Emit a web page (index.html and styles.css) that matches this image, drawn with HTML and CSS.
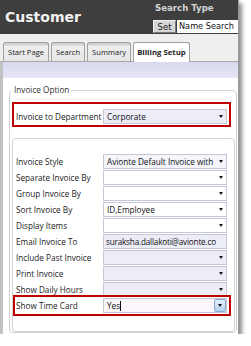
FILE: index.html
```html
<!DOCTYPE html>
<html lang="en">
<head>
  <meta charset="UTF-8">
  <title>Customer - Billing Setup</title>
  <link rel="stylesheet" href="styles.css">
</head>
<body>

  <div class="page">
    <header class="top">
      <h1>Customer</h1>
      <div class="search">
        <div class="search-title">Search Type</div>
        <div class="search-row">
          <button class="btn-set">Set</button>
          <span class="search-input">Name Search</span>
        </div>
      </div>
    </header>

    <nav class="tabs">
      <span class="tab">Start Page</span>
      <span class="tab">Search</span>
      <span class="tab">Summary</span>
      <span class="tab active">Billing Setup</span>
    </nav>

    <div class="content">
      <div class="band"></div>

      <fieldset class="group">
        <legend>Invoice Option</legend>

        <div class="dept">
          <label>Invoice to Department</label>
          <div class="select lav"><span class="val">Corporate</span><span class="arrow"></span></div>
        </div>

        <div class="panel">
          <div class="row">
            <label>Invoice Style</label>
            <div class="select pale"><span class="val">Avionte Default Invoice with</span><span class="arrow"></span></div>
          </div>
          <div class="row">
            <label>Separate Invoice By</label>
            <div class="select"><span class="val"></span><span class="arrow"></span></div>
          </div>
          <div class="row">
            <label>Group Invoice By</label>
            <div class="select"><span class="val"></span><span class="arrow"></span></div>
          </div>
          <div class="row">
            <label>Sort Invoice By</label>
            <div class="select"><span class="val">ID,Employee</span><span class="arrow"></span></div>
          </div>
          <div class="row">
            <label>Display Items</label>
            <div class="select"><span class="val"></span><span class="arrow"></span></div>
          </div>
          <div class="row">
            <label>Email Invoice To</label>
            <div class="select lav"><span class="val email">suraksha.dallakoti@avionte.co</span></div>
          </div>
          <div class="row">
            <label>Include Past Invoice</label>
            <div class="select lav"><span class="val"></span><span class="arrow"></span></div>
          </div>
          <div class="row">
            <label>Print Invoice</label>
            <div class="select lav"><span class="val"></span><span class="arrow"></span></div>
          </div>
          <div class="row">
            <label>Show Daily Hours</label>
            <div class="select lav"><span class="val"></span><span class="arrow"></span></div>
          </div>
          <div class="row mark">
            <label>Show Time Card</label>
            <div class="select focus"><span class="val">Yes<span class="caret"></span></span><span class="drop"><span class="arrow"></span></span></div>
          </div>
        </div>
      </fieldset>
    </div>
  </div>

</body>
</html>
```

FILE: styles.css
```css
* {
  margin: 0;
  padding: 0;
  box-sizing: border-box;
}

body {
  background: #fff;
  font-family: 'Open Sans', sans-serif;
  font-size: 8.2px;
  color: #222;
}

.page {
  width: 239px;
  height: 334px;
  border-right: 1px solid #9a9a9a;
  box-shadow: 3px 3px 4px rgba(0,0,0,0.45);
  overflow: hidden;
  display: flex;
  flex-direction: column;
}

/* header */
.top {
  height: 34px;
  background: #3e3e3e;
  display: flex;
  justify-content: space-between;
}

.top h1 {
  font-family: 'DejaVu Sans', sans-serif;
  font-size: 14px;
  font-weight: bold;
  line-height: 34px;
  color: #f2f2f2;
  padding-left: 5px;
}

.search {
  width: 85px;
  padding-top: 2px;
}

.search-title {
  font-family: 'DejaVu Sans', sans-serif;
  font-size: 8.6px;
  font-weight: bold;
  line-height: 12px;
  color: #d4d4d4;
  padding-left: 2px;
}

.search-row {
  display: flex;
  margin-top: 6px;
  height: 13px;
}

.btn-set {
  width: 23px;
  height: 13px;
  font-family: 'DejaVu Sans', sans-serif;
  font-size: 8.5px;
  color: #222;
  background: #d6d6d6;
  border: 1px solid;
  border-color: #f4f4f4 #7c7c7c #7c7c7c #f4f4f4;
}

.search-input {
  flex: 1;
  margin-left: 1px;
  background: #fff;
  font-family: 'DejaVu Sans', sans-serif;
  font-size: 8.2px;
  line-height: 13px;
  padding-left: 2px;
  white-space: nowrap;
  overflow: hidden;
  color: #111;
}

/* tabs */
.tabs {
  height: 28px;
  background: #f1eeee;
  border-bottom: 1px solid #a8a8a8;
  display: flex;
  align-items: flex-end;
  gap: 2px;
  padding-left: 3px;
}

.tab {
  height: 19px;
  line-height: 18px;
  font-size: 7.6px;
  color: #222;
  padding: 0 4px;
  border: 1px solid #a0a0a0;
  border-bottom: none;
  border-radius: 3px 3px 0 0;
  background: linear-gradient(#d2d2d2 0, #d2d2d2 2px, #efefef 3px, #e6e6e6);
}

.tab.active {
  height: 20px;
  margin-bottom: -1px;
  background: #fff;
  font-weight: bold;
  font-size: 7.8px;
  padding: 0 3px;
}

/* content */
.content {
  flex: 1;
  background: #fff;
  border-left: 3px solid #c2c2c2;
}

.band {
  height: 16px;
  background: linear-gradient(#d8d8ee, #e6e6f6);
}

.group {
  margin: 7px 0 0 6px;
  width: 228px;
  min-width: 0;
  border: 1px solid #d2d2d2;
  border-radius: 4px;
  padding: 0 1px 0 2px;
}

.group legend {
  line-height: 10px;
  padding: 0 2px;
  color: #333;
}

.dept {
  width: 219px;
  height: 25px;
  margin-top: 7px;
  border: 2px solid #c00000;
  display: flex;
  align-items: center;
  padding: 3px 0 0 2px;
}

label {
  flex: none;
  width: 87px;
  white-space: nowrap;
}

.panel {
  margin-top: 11px;
  border: 1px solid #d4d4d4;
  border-radius: 4px;
  padding: 15px 0 18px 3px;
  display: flex;
  flex-direction: column;
  gap: 1px;
}

.row {
  display: flex;
  align-items: center;
  width: 212px;
  padding-right: 1px;
}

.row.mark {
  outline: 2px solid #c00000;
  outline-offset: 1px;
}

.select {
  width: 124px;
  height: 15px;
  border: 1px solid #c6c6d6;
  background: #fff;
  display: flex;
  align-items: center;
  color: #111;
}

.select.lav {
  background: #ededf8;
}

.select.pale {
  background: #f5f5fb;
}

.select.focus {
  background: #fcf7fc;
}

.val {
  flex: 1;
  overflow: hidden;
  white-space: nowrap;
  padding-left: 3px;
  line-height: 13px;
}

.val.email {
  letter-spacing: -0.2px;
  padding-left: 2px;
}

.arrow {
  flex: none;
  margin: 0 3px 0 2px;
  border-left: 2.5px solid transparent;
  border-right: 2.5px solid transparent;
  border-top: 3px solid #111;
}

.caret {
  display: inline-block;
  width: 1px;
  height: 10px;
  background: #111;
  vertical-align: -2px;
}

.drop {
  flex: none;
  width: 12px;
  height: 13px;
  border: 1px solid #86a8c8;
  border-radius: 2px;
  background: linear-gradient(#e4f0fb, #b4d2ee);
  display: flex;
  align-items: center;
  justify-content: center;
}

.drop .arrow {
  margin: 0;
}
```
